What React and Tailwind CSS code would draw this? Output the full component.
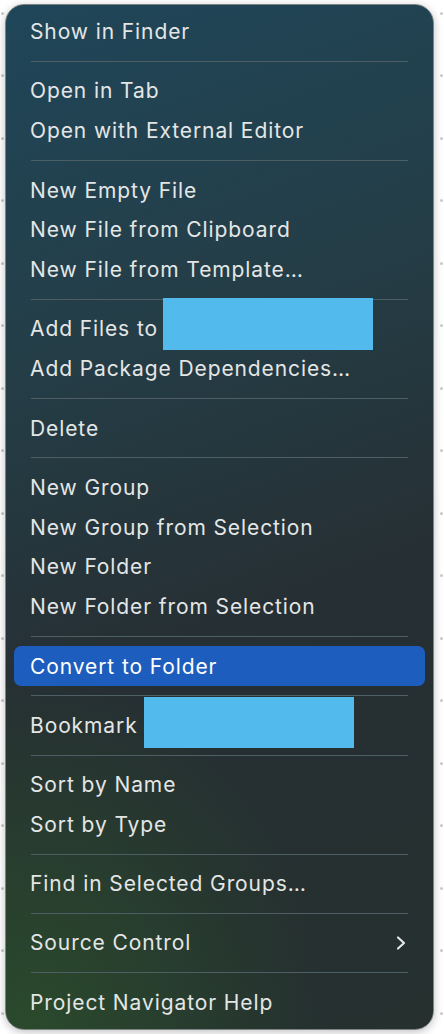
import React from "react";

const groups = [
  ["Show in Finder"],
  ["Open in Tab", "Open with External Editor"],
  ["New Empty File", "New File from Clipboard", "New File from Template…"],
  ["Add Files to", "Add Package Dependencies…"],
  ["Delete"],
  ["New Group", "New Group from Selection", "New Folder", "New Folder from Selection"],
  ["Convert to Folder"],
  ["Bookmark"],
  ["Sort by Name", "Sort by Type"],
  ["Find in Selected Groups…"],
  ["Source Control"],
  ["Project Navigator Help"],
];

function Dots() {
  return (
    <div className="flex flex-col gap-[59.5px] pt-[11.5px]">
      {Array.from({ length: 17 }).map((_, i) => (
        <div key={i} className="h-[3px] w-[3px] rounded-full bg-[#c9c9c9]" />
      ))}
    </div>
  );
}

function Row({ label }) {
  const highlighted = label === "Convert to Folder";
  return (
    <div
      className={
        "relative flex h-[39.8px] items-center " +
        (highlighted ? "mx-[8px] rounded-[7px] bg-[#1d5dbd] pl-[16px] text-white" : "pl-[24px] text-[#e4e6e6]")
      }
    >
      <span>{label}</span>
      {label === "Add Files to" && (
        <div className="absolute left-[157px] top-[-11px] h-[52px] w-[210px] bg-[#53baee]" />
      )}
      {label === "Bookmark" && (
        <div className="absolute left-[138px] top-[-9px] h-[51px] w-[210px] bg-[#53baee]" />
      )}
      {label === "Source Control" && (
        <svg className="absolute right-[26px] top-[12px]" width="12" height="16" viewBox="0 0 12 16" fill="none">
          <path d="M3 2.5 L9 8 L3 13.5" stroke="#e4e6e6" strokeWidth="2.2" strokeLinecap="round" strokeLinejoin="round" />
        </svg>
      )}
    </div>
  );
}

export default function App() {
  return (
    <div className="flex h-[1034px] w-[444px] bg-white" style={{ fontFamily: '"Inter", "Liberation Sans", sans-serif' }}>
      <div className="flex w-[5px] justify-start pl-[1px]">
        <Dots />
      </div>
      <div className="pt-[4px]">
        <div className="h-[1026px] w-[429px] overflow-hidden rounded-[19px] border border-[#7d8486] bg-[radial-gradient(ellipse_70%_35%_at_5%_100%,#2a4a2c_0%,rgba(42,74,44,0)_100%),linear-gradient(160deg,#1f4659_0%,#243e48_30%,#262f33_60%,#25302f_100%)] py-[7px] text-[21px] tracking-[0.9px] shadow-[0_2px_8px_rgba(0,0,0,0.25)]">
          {groups.map((g, gi) => (
            <div key={gi}>
              {gi > 0 && (
                <div className="flex h-[19.5px] items-center px-[25px]">
                  <div className="h-px w-full bg-[#4d5f64]" />
                </div>
              )}
              {g.map((label) => (
                <Row key={label} label={label} />
              ))}
            </div>
          ))}
        </div>
      </div>
      <div className="pl-[6px]">
        <Dots />
      </div>
    </div>
  );
}
